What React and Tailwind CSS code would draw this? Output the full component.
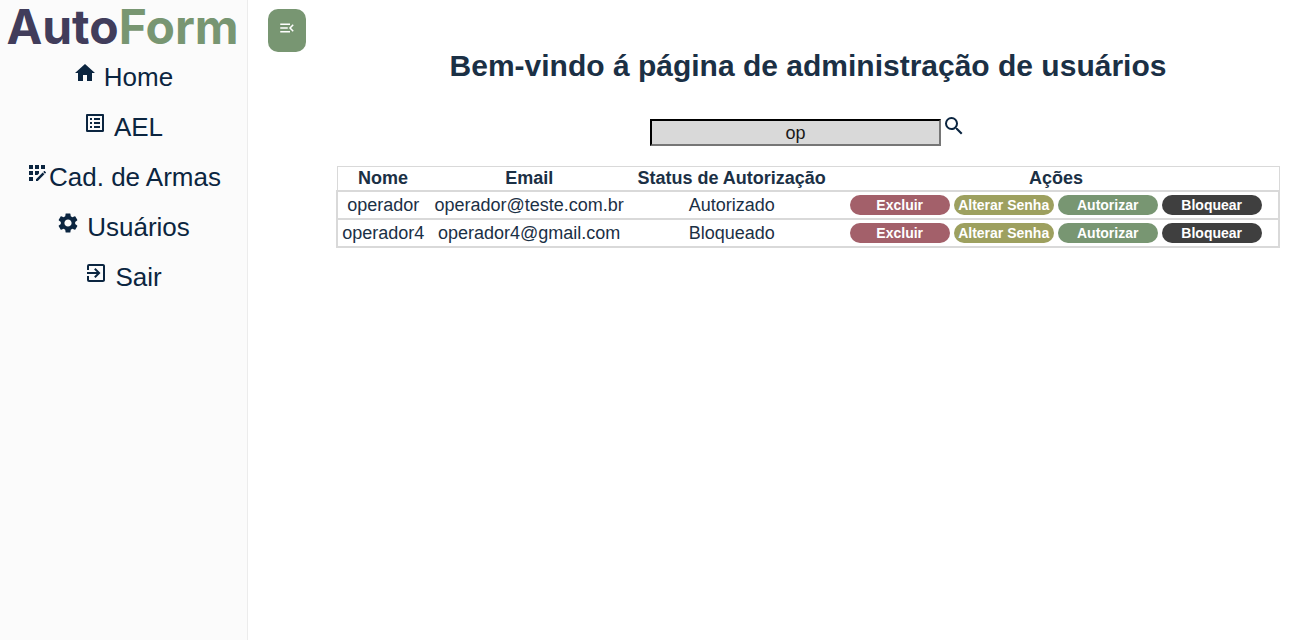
import { useState } from "react";
import {
  MdHome,
  MdOutlineListAlt,
  MdAppRegistration,
  MdSettings,
  MdExitToApp,
  MdSearch,
  MdMenuOpen,
} from "react-icons/md";

const links = [
  { label: "Home", icon: MdHome, gap: "gap-[7px]" },
  { label: "AEL", icon: MdOutlineListAlt, gap: "gap-[7px]" },
  { label: "Cad. de Armas", icon: MdAppRegistration, gap: "gap-0" },
  { label: "Usuários", icon: MdSettings, gap: "gap-[7px]" },
  { label: "Sair", icon: MdExitToApp, gap: "gap-[7px]" },
];

const users = [
  { name: "operador", email: "operador@teste.com.br", status: "Autorizado" },
  { name: "operador4", email: "operador4@gmail.com", status: "Bloqueado" },
];

const actions = [
  { label: "Excluir", color: "bg-[#a3606a]" },
  { label: "Alterar Senha", color: "bg-[#9da05f]" },
  { label: "Autorizar", color: "bg-[#789672]" },
  { label: "Bloquear", color: "bg-[#3f3f3f]" },
];

function Sidebar() {
  return (
    <aside className="w-[248px] shrink-0 border-r border-[#ececec] bg-[#fbfbfb]">
      <div className="pr-0.5 text-center font-[family-name:Inter] text-5xl leading-[54px] font-bold text-[#413d5b]">
        Auto<span className="text-[#789672]">Form</span>
      </div>
      <nav className="flex flex-col gap-[18px] pt-[7px] pr-px">
        {links.map(({ label, icon: Icon, gap }) => (
          <a
            key={label}
            href="#"
            className={`flex items-start justify-center text-[26px] leading-8 text-[#0b2540] ${gap}`}
          >
            <Icon className="size-6 shrink-0" aria-hidden="true" />
            {label}
          </a>
        ))}
      </nav>
    </aside>
  );
}

function UserTable({ rows }) {
  return (
    <table className="w-full table-fixed border-collapse border border-[#d9d9d9] text-center text-lg leading-[23px]">
      <colgroup>
        <col className="w-[9.7%]" />
        <col className="w-[21.4%]" />
        <col className="w-[21.6%]" />
        <col />
      </colgroup>
      <thead>
        <tr>
          <th>Nome</th>
          <th>Email</th>
          <th>Status de Autorização</th>
          <th>Ações</th>
        </tr>
      </thead>
      <tbody>
        {rows.map((user) => (
          <tr key={user.email} className="border-2 border-[#d9d9d9]">
            <td>{user.name}</td>
            <td>{user.email}</td>
            <td>{user.status}</td>
            <td className="py-[3px]">
              <div className="flex justify-center gap-1">
                {actions.map((action) => (
                  <button
                    key={action.label}
                    type="button"
                    className={`h-5 w-[100px] rounded-full text-sm leading-5 font-bold whitespace-nowrap text-white ${action.color}`}
                  >
                    {action.label}
                  </button>
                ))}
              </div>
            </td>
          </tr>
        ))}
      </tbody>
    </table>
  );
}

export default function App() {
  const [query, setQuery] = useState("op");
  const rows = users.filter((user) => user.name.includes(query));

  return (
    <div className="flex min-h-screen bg-white font-['Liberation_Sans',Arial,sans-serif] text-[#1b3045]">
      <Sidebar />
      <div className="w-[68px] shrink-0 pt-[9px] pl-5">
        <button
          type="button"
          aria-label="Recolher menu"
          className="flex h-[43px] w-[38px] justify-center rounded-[10px] bg-[#789672] pt-2.5 text-white"
        >
          <MdMenuOpen className="size-[18px]" aria-hidden="true" />
        </button>
      </div>
      <main className="min-w-0 flex-1 pt-[46px] pr-5 pl-5">
        <h1 className="text-center text-[30px] leading-10 font-bold">
          Bem-vindo á página de administração de usuários
        </h1>
        <form
          className="flex items-start justify-center gap-px pt-7"
          onSubmit={(event) => event.preventDefault()}
        >
          <input
            type="text"
            aria-label="Buscar usuário"
            value={query}
            onChange={(event) => setQuery(event.target.value)}
            className="mt-[5px] h-[27px] w-[291px] border-2 border-t-black border-r-[#767676] border-b-[#767676] border-l-black bg-[#d9d9d9] text-center text-lg text-[#1a1a1a] outline-none"
          />
          <button type="submit" aria-label="Buscar" className="text-[#0b2540]">
            <MdSearch className="size-6" aria-hidden="true" />
          </button>
        </form>
        <div className="pt-5">
          <UserTable rows={rows} />
        </div>
      </main>
    </div>
  );
}
